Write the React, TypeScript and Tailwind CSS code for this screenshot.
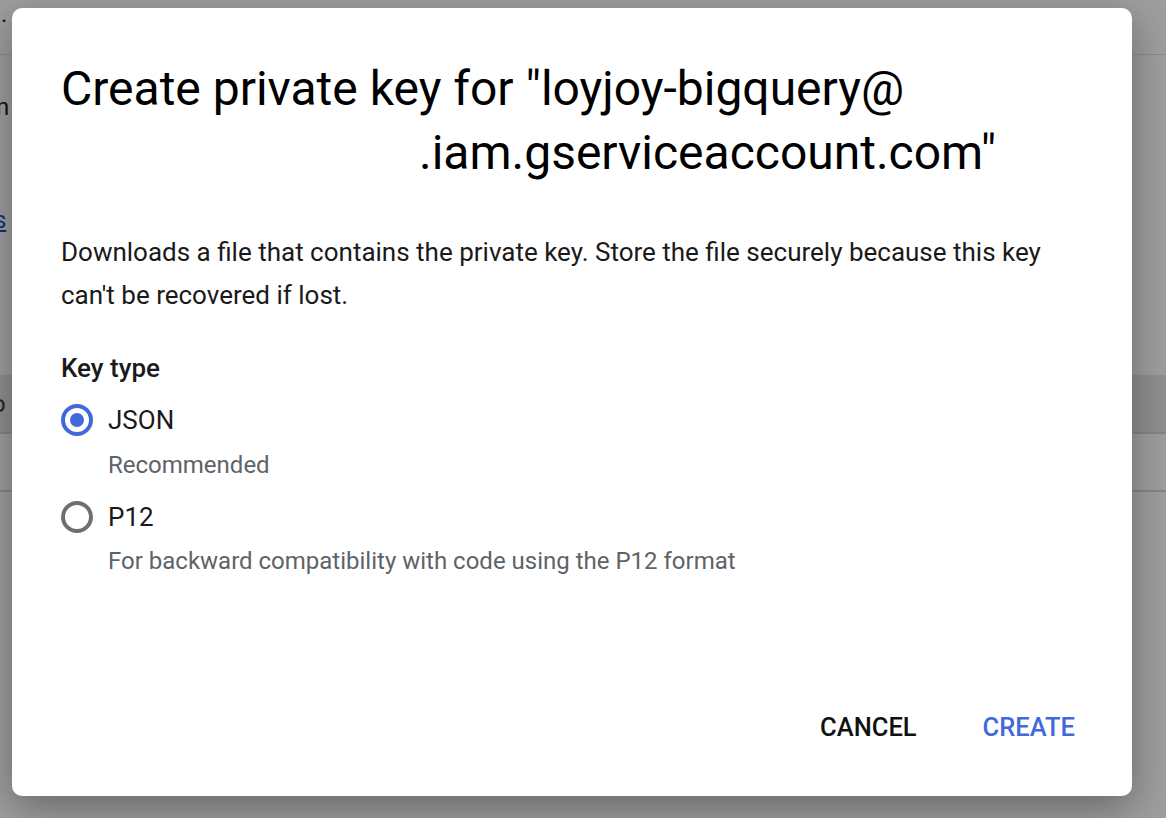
import React from "react";

function Radio({ checked }: { checked: boolean }) {
  return (
    <div className="flex h-[32px] w-[32px] shrink-0 items-center justify-center">
      {checked ? (
        <div className="flex h-[32px] w-[32px] items-center justify-center rounded-full border-[4px] border-[#4169d9]">
          <div className="h-[14px] w-[14px] rounded-full bg-[#4169d9]" />
        </div>
      ) : (
        <div className="h-[32px] w-[32px] rounded-full border-[4px] border-[#6f6f6f]" />
      )}
    </div>
  );
}

export default function App() {
  return (
    <div
      className="relative h-[818px] w-[1166px] overflow-hidden bg-white"
      style={{ fontFamily: "Roboto, 'Liberation Sans', sans-serif" }}
    >
      {/* Background page */}
      <div className="flex h-full flex-col">
        <div className="flex h-[55px] items-start border-b border-[#e0e0e0] text-[24px] leading-[28px] text-[#202124]">
          <span className="pl-[1px]">.</span>
        </div>
        <div className="mt-[34px] text-[24px] text-[#202124]">
          <span className="-ml-[4px]">n</span>
        </div>
        <div className="mt-[77px] text-[24px] text-[#1a4fc6] underline">
          <span className="-ml-[6px]">s</span>
        </div>
        <div className="mt-[137px] flex h-[57px] items-center bg-[#e6e7e9] text-[24px] text-[#3c4043]">
          <span className="-ml-[8px]">o</span>
        </div>
        <div className="h-[2px] bg-[#d5d7db]" />
        <div className="h-[56px]" />
        <div className="h-[2px] bg-[#d5d7db]" />
      </div>

      {/* Scrim */}
      <div className="absolute inset-0 bg-[rgba(0,0,0,0.38)]" />

      {/* Dialog */}
      <div className="absolute left-[12px] top-[8px] flex h-[788px] w-[1120px] flex-col rounded-[10px] bg-white pl-[49px] pr-[57px] shadow-[0_12px_40px_rgba(0,0,0,0.35)]">
        <div className="mt-[49px] text-[48px] leading-[64px] text-[#000]">
          <div>Create private key for "loyjoy-bigquery@</div>
          <div className="pl-[358px]">.iam.gserviceaccount.com"</div>
        </div>

        <p className="mt-[46px] text-[26px] leading-[43px] text-[#1a1a1a]">
          Downloads a file that contains the private key. Store the file securely because this key
          can't be recovered if lost.
        </p>

        <div className="mt-[35px] text-[26px] font-medium leading-[32px] text-[#1a1a1a]">Key type</div>

        <div className="mt-[20px] flex flex-col">
          <div className="flex items-center gap-[15px]">
            <Radio checked />
            <span className="text-[26px] leading-[32px] text-[#1a1a1a]">JSON</span>
          </div>
          <div className="ml-[47px] mt-[13px] text-[24px] leading-[32px] text-[#5f6368]">Recommended</div>

          <div className="mt-[20px] flex items-center gap-[15px]">
            <Radio checked={false} />
            <span className="text-[26px] leading-[32px] text-[#1a1a1a]">P12</span>
          </div>
          <div className="ml-[47px] mt-[12px] text-[24px] leading-[32px] text-[#5f6368]">
            For backward compatibility with code using the P12 format
          </div>
        </div>

        <div className="mt-auto mb-[52px] flex justify-end gap-[34px]">
          <button className="h-[36px] px-[16px] text-[25.5px] font-medium text-[#111]">CANCEL</button>
          <button className="-mr-[16px] h-[36px] px-[16px] text-[25.5px] font-medium text-[#4169d9]">CREATE</button>
        </div>
      </div>
    </div>
  );
}
